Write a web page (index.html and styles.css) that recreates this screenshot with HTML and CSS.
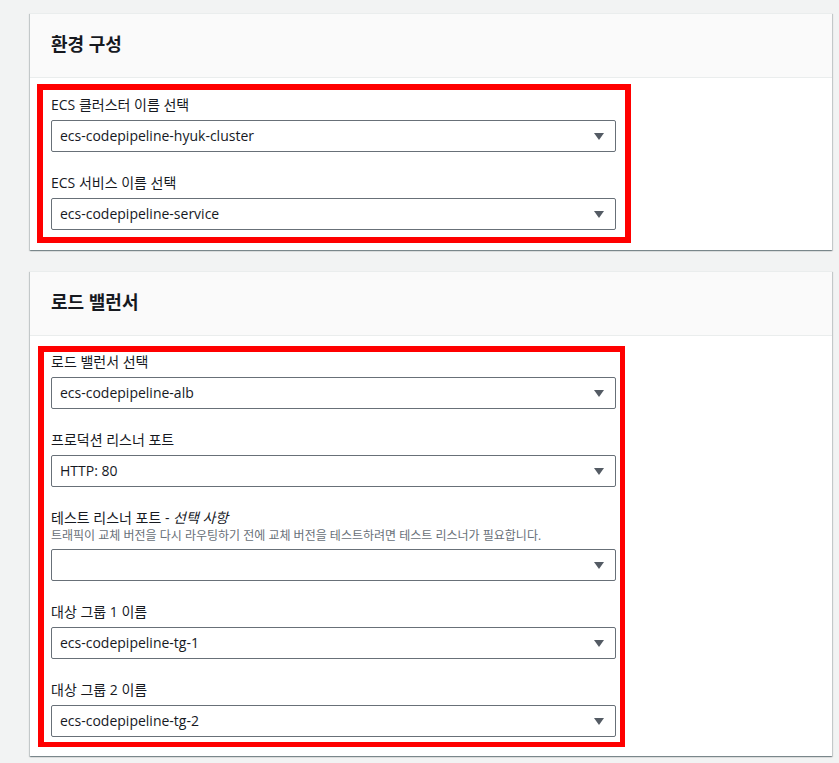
FILE: index.html
```html
<!DOCTYPE html>
<html lang="ko">
<head>
<meta charset="utf-8">
<title>환경 구성</title>
<link rel="stylesheet" href="styles.css">
</head>
<body>
<div class="page">
  <section class="card">
    <div class="card-header"><h2 class="card-title">환경 구성</h2></div>
    <div class="card-body card-body--first">
      <div class="highlight highlight--wide">
        <div class="field field--first">
          <div class="label">ECS 클러스터 이름 선택</div>
          <div class="select"><span class="select-value">ecs-codepipeline-hyuk-cluster</span><svg class="caret" viewBox="0 0 10 7" width="10" height="7"><polygon points="0,0 10,0 5,7"/></svg></div>
        </div>
        <div class="field">
          <div class="label">ECS 서비스 이름 선택</div>
          <div class="select"><span class="select-value">ecs-codepipeline-service</span><svg class="caret" viewBox="0 0 10 7" width="10" height="7"><polygon points="0,0 10,0 5,7"/></svg></div>
        </div>
      </div>
    </div>
  </section>

  <section class="card card--second">
    <div class="card-header"><h2 class="card-title">로드 밸런서</h2></div>
    <div class="card-body card-body--second">
      <div class="highlight highlight--narrow">
        <div class="field field--top">
          <div class="label">로드 밸런서 선택</div>
          <div class="select"><span class="select-value">ecs-codepipeline-alb</span><svg class="caret" viewBox="0 0 10 7" width="10" height="7"><polygon points="0,0 10,0 5,7"/></svg></div>
        </div>
        <div class="field">
          <div class="label">프로덕션 리스너 포트</div>
          <div class="select"><span class="select-value">HTTP: 80</span><svg class="caret" viewBox="0 0 10 7" width="10" height="7"><polygon points="0,0 10,0 5,7"/></svg></div>
        </div>
        <div class="field field--desc">
          <div class="label">테스트 리스너 포트 - <i>선택 사항</i></div>
          <div class="desc">트래픽이 교체 버전을 다시 라우팅하기 전에 교체 버전을 테스트하려면 테스트 리스너가 필요합니다.</div>
          <div class="select"><span class="select-value"></span><svg class="caret" viewBox="0 0 10 7" width="10" height="7"><polygon points="0,0 10,0 5,7"/></svg></div>
        </div>
        <div class="field">
          <div class="label">대상 그룹 1 이름</div>
          <div class="select"><span class="select-value">ecs-codepipeline-tg-1</span><svg class="caret" viewBox="0 0 10 7" width="10" height="7"><polygon points="0,0 10,0 5,7"/></svg></div>
        </div>
        <div class="field">
          <div class="label">대상 그룹 2 이름</div>
          <div class="select"><span class="select-value">ecs-codepipeline-tg-2</span><svg class="caret" viewBox="0 0 10 7" width="10" height="7"><polygon points="0,0 10,0 5,7"/></svg></div>
        </div>
      </div>
    </div>
  </section>
</div>
</body>
</html>
```
FILE: styles.css
```css
html, body {
  margin: 0;
  padding: 0;
  background: #f2f3f3;
}
body {
  font-family: "Open Sans", "Noto Sans CJK KR", sans-serif;
  color: #16191f;
  font-size: 14px;
}
.page {
  padding: 13px 7px 6px 30px;
}
.card {
  width: 802px;
  background: #ffffff;
  border-top: 1px solid #eaeded;
  box-shadow: 0 1px 1px 0 rgba(0, 28, 36, 0.3), 1px 1px 1px 0 rgba(0, 28, 36, 0.15), -1px 1px 1px 0 rgba(0, 28, 36, 0.15);
  box-sizing: border-box;
}
.card--second {
  margin-top: 21px;
}
.card-header {
  background: #fafafa;
  border-bottom: 1px solid #eaeded;
  height: 63px;
  display: flex;
  align-items: center;
  padding-left: 21px;
}
.card-title {
  margin: 0;
  font-size: 18px;
  font-weight: 700;
  line-height: 22px;
  padding-bottom: 3px;
}
.card-body {
  padding-left: 7px;
}
.card-body--first {
  padding-top: 6px;
  padding-bottom: 7px;
}
.card-body--second {
  padding-top: 10px;
  padding-bottom: 9px;
}
.highlight {
  border: 6px solid #ff0000;
  padding-left: 8px;
  box-sizing: border-box;
}
.highlight--wide {
  width: 594px;
  padding-top: 5px;
  padding-bottom: 7px;
}
.highlight--narrow {
  width: 587px;
  margin-left: 1px;
  padding-left: 7px;
  padding-top: 0;
  padding-bottom: 5px;
  border-width: 6px 5px 5px 6px;
}
.field {
  margin-top: 21px;
}
.field--first, .field--top {
  margin-top: 0;
}
.label {
  font-size: 14px;
  line-height: 20px;
  height: 20px;
  margin-bottom: 5px;
}
.label i {
  font-style: italic;
}
.field--desc .label {
  margin-bottom: 0;
}
.desc {
  font-size: 12px;
  line-height: 16px;
  color: #687078;
  margin-bottom: 5px;
}
.select {
  width: 565px;
  height: 32px;
  border: 1px solid #687078;
  border-radius: 2px;
  box-sizing: border-box;
  display: flex;
  align-items: center;
  justify-content: space-between;
  padding: 0 11px 0 8px;
  background: #ffffff;
}
.select-value {
  font-size: 14px;
  line-height: 20px;
}
.caret {
  fill: #545b64;
  flex: none;
}
```
